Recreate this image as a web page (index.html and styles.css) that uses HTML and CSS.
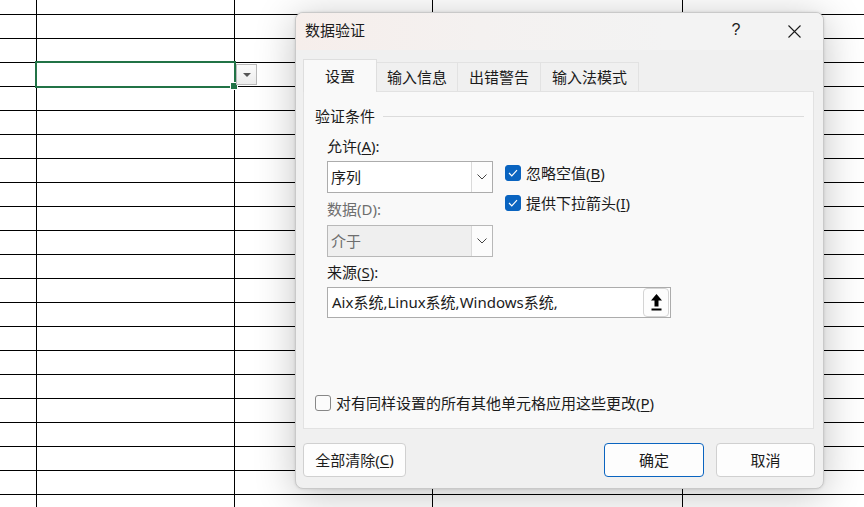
FILE: index.html
```html
<!DOCTYPE html>
<html lang="zh-CN">
<head>
<meta charset="utf-8">
<title>数据验证</title>
<link rel="stylesheet" href="styles.css">
</head>
<body>
<div class="sheet">
  <div class="c"></div><div class="c"></div><div class="c"></div><div class="c"></div><div class="c last"></div>
  <div class="c"></div><div class="c"></div><div class="c"></div><div class="c"></div><div class="c last"></div>
  <div class="c"></div><div class="c"></div><div class="c"></div><div class="c"></div><div class="c last"></div>
  <div class="c"></div><div class="c"></div><div class="c"></div><div class="c"></div><div class="c last"></div>
  <div class="c"></div><div class="c"></div><div class="c"></div><div class="c"></div><div class="c last"></div>
  <div class="c"></div><div class="c"></div><div class="c"></div><div class="c"></div><div class="c last"></div>
  <div class="c"></div><div class="c"></div><div class="c"></div><div class="c"></div><div class="c last"></div>
  <div class="c"></div><div class="c"></div><div class="c"></div><div class="c"></div><div class="c last"></div>
  <div class="c"></div><div class="c"></div><div class="c"></div><div class="c"></div><div class="c last"></div>
  <div class="c"></div><div class="c"></div><div class="c"></div><div class="c"></div><div class="c last"></div>
  <div class="c"></div><div class="c"></div><div class="c"></div><div class="c"></div><div class="c last"></div>
  <div class="c"></div><div class="c"></div><div class="c"></div><div class="c"></div><div class="c last"></div>
  <div class="c"></div><div class="c"></div><div class="c"></div><div class="c"></div><div class="c last"></div>
  <div class="c"></div><div class="c"></div><div class="c"></div><div class="c"></div><div class="c last"></div>
  <div class="c"></div><div class="c"></div><div class="c"></div><div class="c"></div><div class="c last"></div>
  <div class="c"></div><div class="c"></div><div class="c"></div><div class="c"></div><div class="c last"></div>
  <div class="c"></div><div class="c"></div><div class="c"></div><div class="c"></div><div class="c last"></div>
  <div class="c"></div><div class="c"></div><div class="c"></div><div class="c"></div><div class="c last"></div>
  <div class="c"></div><div class="c"></div><div class="c"></div><div class="c"></div><div class="c last"></div>
  <div class="c"></div><div class="c"></div><div class="c"></div><div class="c"></div><div class="c last"></div>
  <div class="c"></div><div class="c"></div><div class="c"></div><div class="c"></div><div class="c last"></div>
  <div class="c"></div><div class="c"></div><div class="c"></div><div class="c"></div><div class="c last"></div>
</div>

<div class="selection"><span class="handle"></span></div>
<div class="cell-drop"><span class="tri"></span></div>

<div class="dialog">
  <div class="titlebar">
    <span class="title">数据验证</span>
    <span class="help">?</span>
    <span class="close">
      <svg width="13" height="13" viewBox="0 0 13 13"><path d="M0.5 0.5 L12.5 12.5 M12.5 0.5 L0.5 12.5" stroke="#1b1b1b" stroke-width="1.1" fill="none"/></svg>
    </span>
  </div>
  <div class="body">
    <div class="tabs">
      <div class="tab active">设置</div>
      <div class="tab">输入信息</div>
      <div class="tab">出错警告</div>
      <div class="tab">输入法模式</div>
    </div>
    <div class="panel">
      <div class="legend"><span class="txt">验证条件</span><span class="rule"></span></div>
      <div class="form">
        <div class="row-main">
          <div class="col-left">
            <div class="label">允许(<u>A</u>):</div>
            <div class="select">
              <span class="value">序列</span>
              <span class="drop"><svg width="10" height="6" viewBox="0 0 10 6"><polyline points="0.5,0.5 5,5 9.5,0.5" fill="none" stroke="#444" stroke-width="1"/></svg></span>
            </div>
            <div class="label disabled gap-data">数据(D):</div>
            <div class="select is-disabled">
              <span class="value">介于</span>
              <span class="drop"><svg width="10" height="6" viewBox="0 0 10 6"><polyline points="0.5,0.5 5,5 9.5,0.5" fill="none" stroke="#444" stroke-width="1"/></svg></span>
            </div>
          </div>
          <div class="col-right">
            <div class="check-row">
              <span class="cb on"><svg width="10" height="8" viewBox="0 0 10 8"><polyline points="1,4 3.8,6.8 9,1.2" fill="none" stroke="#fff" stroke-width="1.2"/></svg></span>
              <span class="txt">忽略空值(<u>B</u>)</span>
            </div>
            <div class="check-row">
              <span class="cb on"><svg width="10" height="8" viewBox="0 0 10 8"><polyline points="1,4 3.8,6.8 9,1.2" fill="none" stroke="#fff" stroke-width="1.2"/></svg></span>
              <span class="txt">提供下拉箭头(<u>I</u>)</span>
            </div>
          </div>
        </div>
        <div class="label gap-src">来源(<u>S</u>):</div>
        <div class="source">
          <span class="value">Aix系统,Linux系统,Windows系统,</span>
          <span class="pick"><svg width="11" height="17" viewBox="0 0 11 17"><path d="M5.5 0 L11 6.5 L7.5 6.5 L7.5 12.5 L3.5 12.5 L3.5 6.5 L0 6.5 Z" fill="#000"/><rect x="0.5" y="14.5" width="10" height="2" fill="#000"/></svg></span>
        </div>
      </div>
      <div class="check-row bottom">
        <span class="cb"></span>
        <span class="txt">对有同样设置的所有其他单元格应用这些更改(<u>P</u>)</span>
      </div>
    </div>
    <div class="footer">
      <div class="btn clear">全部清除(<u>C</u>)</div>
      <div class="spacer"></div>
      <div class="btn ok">确定</div>
      <div class="btn cancel">取消</div>
    </div>
  </div>
</div>
</body>
</html>
```

FILE: styles.css
```css
html, body {
  margin: 0;
  padding: 0;
  width: 864px;
  height: 507px;
  overflow: hidden;
  background: #fff;
}
body {
  position: relative;
  font-family: "Noto Sans", "Noto Sans CJK SC", sans-serif;
  font-size: 15px;
  color: #1b1b1b;
}

/* spreadsheet */
.sheet {
  display: grid;
  grid-template-columns: 37px 198px 198px 250px 1fr;
  grid-auto-rows: 24px;
  margin-top: -9px;
}
.c {
  box-sizing: border-box;
  border-right: 1px solid #000;
  border-bottom: 1px solid #000;
}
.c.last { border-right: none; }

.selection {
  position: absolute;
  left: 35px;
  top: 61px;
  width: 201px;
  height: 27px;
  box-sizing: border-box;
  border: 2px solid #217346;
}
.selection .handle {
  position: absolute;
  right: -3px;
  bottom: -3px;
  width: 6px;
  height: 6px;
  background: #217346;
  border: 1px solid #fff;
  box-sizing: content-box;
  transform: translate(1px, 1px);
}
.cell-drop {
  position: absolute;
  left: 236px;
  top: 64px;
  width: 21px;
  height: 21px;
  box-sizing: border-box;
  border: 1px solid #b9b9b9;
  background: linear-gradient(#fbfbfb, #ececec);
  display: flex;
  align-items: center;
  justify-content: center;
}
.cell-drop .tri {
  width: 0;
  height: 0;
  border-left: 4px solid transparent;
  border-right: 4px solid transparent;
  border-top: 4px solid #555;
  margin-top: 1px;
}

/* dialog */
.dialog {
  position: absolute;
  left: 295px;
  top: 12px;
  width: 529px;
  height: 477px;
  box-sizing: border-box;
  border: 1px solid #c9c9c9;
  border-radius: 8px;
  background: #f0f0f0;
  box-shadow: 0 6px 40px rgba(0, 0, 0, 0.24), 0 0 3px rgba(0, 0, 0, 0.12);
  overflow: hidden;
  display: flex;
  flex-direction: column;
}
.titlebar {
  height: 37px;
  box-sizing: border-box;
  flex: none;
  display: flex;
  align-items: center;
  padding-left: 9px;
  padding-bottom: 4px;
  background: linear-gradient(to right, #f6eeeb 0%, #f4f1f0 35%, #f3f3f3 70%);
}
.title { font-size: 15px; }
.help {
  margin-left: auto;
  font-family: "Liberation Sans", sans-serif;
  font-size: 16px;
  width: 10px;
  text-align: center;
}
.close {
  display: flex;
  margin-left: 47px;
  margin-right: 22px;
  margin-top: 3px;
}

.body {
  flex: 1;
  display: flex;
  flex-direction: column;
  padding: 9px 9px 11px 7px;
}
.tabs {
  display: flex;
  align-items: flex-end;
  height: 32px;
  position: relative;
  z-index: 1;
}
.tab {
  box-sizing: border-box;
  height: 29px;
  padding: 0 11px 1px;
  display: flex;
  align-items: center;
  border: 1px solid #e2e2e2;
  border-bottom: none;
  margin-left: -1px;
  background: #f0f0f0;
}
.tab.active {
  height: 33px;
  margin-left: 0;
  margin-bottom: -1px;
  padding: 0 21px 2px;
  background: #f9f9f9;
  border-color: #dedede;
}
.tab:nth-child(2) { margin-left: 0; border-left: none; padding: 0 10px 1px; }

.panel {
  height: 338px;
  box-sizing: border-box;
  border: 1px solid #e2e2e2;
  background: #f9f9f9;
  display: flex;
  flex-direction: column;
  padding: 14px 9px 15px 11px;
}
.legend {
  display: flex;
  align-items: center;
  height: 20px;
  line-height: 20px;
}
.legend .txt { padding-bottom: 1px; line-height: 18px; }
.legend .rule {
  flex: 1;
  height: 1px;
  background: #dcdcdc;
  margin-left: 8px;
}
.form {
  padding-left: 12px;
}
.row-main {
  display: flex;
  margin-top: 11px;
}
.col-left {
  width: 166px;
  display: flex;
  flex-direction: column;
}
.label {
  height: 20px;
  line-height: 18px;
}
.label.disabled { color: #6e6e6e; }
.gap-data { margin-top: 7px; }
.gap-src { margin-top: 6px; }

.select {
  margin-top: 4px;
  height: 32px;
  box-sizing: border-box;
  border: 1px solid #acacac;
  background: #fff;
  display: flex;
  align-items: stretch;
}
.select .value {
  flex: 1;
  display: flex;
  align-items: center;
  padding-left: 3px;
  padding-bottom: 2px;
}
.select .drop {
  width: 20px;
  border-left: 1px solid #dadada;
  display: flex;
  align-items: center;
  justify-content: center;
  background: #fdfdfd;
}
.select.is-disabled {
  margin-top: 5px;
  background: #efefef;
  border-color: #b8b8b8;
}
.select.is-disabled .value { color: #6e6e6e; }
.select.is-disabled .drop { background: #fcfcfc; }

.col-right {
  margin-left: 12px;
  padding-top: 26px;
  display: flex;
  flex-direction: column;
  gap: 10px;
}
.check-row {
  display: flex;
  align-items: center;
  height: 20px;
  gap: 5px;
}
.check-row .txt { padding-bottom: 2px; }
.cb {
  width: 16px;
  height: 16px;
  box-sizing: border-box;
  border-radius: 3px;
  border: 1px solid #878787;
  background: #fbfbfb;
  display: flex;
  align-items: center;
  justify-content: center;
  flex: none;
}
.cb.on {
  background: #0a64c0;
  border-color: #0a64c0;
}

.source {
  margin-top: 4px;
  width: 344px;
  height: 31px;
  box-sizing: border-box;
  border: 1px solid #acacac;
  background: #fff;
  display: flex;
  align-items: center;
}
.source .value {
  flex: 1;
  padding-left: 4px;
  padding-bottom: 2px;
}
.source .pick {
  width: 26px;
  height: 29px;
  box-sizing: border-box;
  border: 1px solid #d4d4d4;
  border-radius: 4px;
  background: #fdfdfd;
  display: flex;
  align-items: center;
  justify-content: center;
  margin-right: 1px;
}
.check-row.bottom {
  margin-top: auto;
}

.footer {
  display: flex;
  margin-top: 14px;
  margin-right: -1px;
  gap: 12px;
}
.spacer { flex: 1; }
.btn {
  height: 34px;
  box-sizing: border-box;
  border: 1px solid #d0d0d0;
  border-radius: 4px;
  background: #fdfdfd;
  display: flex;
  align-items: center;
  justify-content: center;
  padding-bottom: 2px;
}
.btn.clear { width: 103px; }
.btn.ok { width: 100px; border-color: #0a64c0; }
.btn.cancel { width: 99px; }
u { text-underline-offset: 2px; }
```
